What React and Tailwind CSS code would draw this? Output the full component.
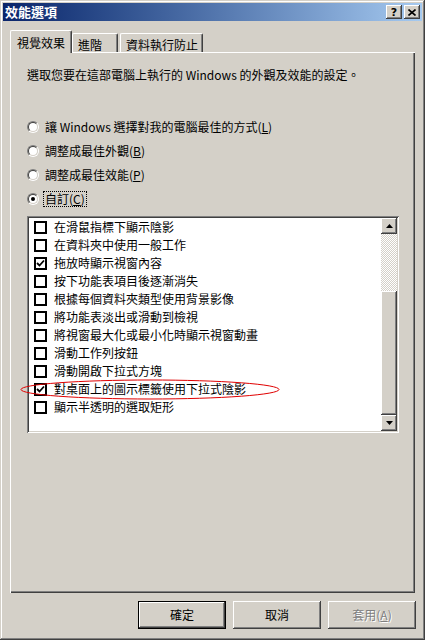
import React from "react";

const raised =
  "shadow-[inset_-1px_-1px_0_#404040,inset_1px_1px_0_#ffffff,inset_-2px_-2px_0_#808080,inset_2px_2px_0_#d4d0c8]";
const sunken =
  "shadow-[inset_1px_1px_0_#808080,inset_-1px_-1px_0_#ffffff,inset_2px_2px_0_#404040,inset_-2px_-2px_0_#d4d0c8]";

function Radio({ checked }) {
  return (
    <span className="relative inline-block w-[12px] h-[12px] shrink-0 rounded-full border border-t-[#808080] border-l-[#808080] border-b-white border-r-white">
      <span className="absolute inset-0 rounded-full border border-t-[#404040] border-l-[#404040] border-b-[#d4d0c8] border-r-[#d4d0c8] bg-white flex items-center justify-center">
        {checked && <span className="w-[4px] h-[4px] rounded-full bg-black" />}
      </span>
    </span>
  );
}

function Check({ checked }) {
  return (
    <span className="w-[13px] h-[13px] shrink-0 border-2 border-black bg-white flex items-center justify-center">
      {checked && (
        <svg width="9" height="9" viewBox="0 0 9 9">
          <polyline points="1,4 3.5,6.5 8,1.5" fill="none" stroke="#000" strokeWidth="1.8" />
        </svg>
      )}
    </span>
  );
}

const items = [
  ["在滑鼠指標下顯示陰影", false],
  ["在資料夾中使用一般工作", false],
  ["拖放時顯示視窗內容", true],
  ["按下功能表項目後逐漸消失", false],
  ["根據每個資料夾類型使用背景影像", false],
  ["將功能表淡出或滑動到檢視", false],
  ["將視窗最大化或最小化時顯示視窗動畫", false],
  ["滑動工作列按鈕", false],
  ["滑動開啟下拉式方塊", false],
  ["對桌面上的圖示標籤使用下拉式陰影", true],
  ["顯示半透明的選取矩形", false],
];

export default function App() {
  return (
    <div
      className={`w-[425px] h-[640px] bg-[#d4d0c8] p-[3px] flex flex-col text-black text-[12px] font-['Noto_Sans_CJK_TC',sans-serif] shadow-[inset_-1px_-1px_0_#404040,inset_1px_1px_0_#d4d0c8,inset_-2px_-2px_0_#808080,inset_2px_2px_0_#ffffff]`}
    >
      {/* title bar */}
      <div className="h-[18px] flex items-center justify-between bg-gradient-to-r from-[#0a246a] to-[#a6caf0] pl-[2px] pr-[2px]">
        <span className="text-white font-bold text-[13px] leading-[18px]">效能選項</span>
        <div className="flex gap-[2px]">
          <div className={`w-[16px] h-[14px] bg-[#d4d0c8] ${raised} flex items-center justify-center text-[11px] font-bold leading-none font-['DejaVu_Sans',sans-serif]`}>
            ?
          </div>
          <div className={`w-[16px] h-[14px] bg-[#d4d0c8] ${raised} flex items-center justify-center`}>
            <svg width="8" height="7" viewBox="0 0 8 7">
              <path d="M0.5 0.5 L7.5 6.5 M7.5 0.5 L0.5 6.5" stroke="#000" strokeWidth="1.6" />
            </svg>
          </div>
        </div>
      </div>

      {/* tabs */}
      <div className="mt-[9px] ml-[7px] h-[23px] flex items-end relative z-10 -mb-px">
        <div className="h-[23px] w-[62px] bg-[#d4d0c8] border-l border-t border-white rounded-tl-[2px] rounded-tr-[2px] border-r border-r-[#404040] shadow-[inset_-1px_0_0_#808080] flex justify-center pt-[4px] leading-[16px]">
          視覺效果
        </div>
        <div className="h-[19px] mb-px w-[46px] bg-[#d4d0c8] border-l border-t border-white rounded-tl-[2px] rounded-tr-[2px] border-r border-r-[#404040] shadow-[inset_-1px_0_0_#808080] pl-[5px] pt-[3px] leading-[16px]">
          進階
        </div>
        <div className="h-[19px] mb-px ml-[2px] w-[83px] bg-[#d4d0c8] border-l border-t border-white rounded-tl-[2px] rounded-tr-[2px] border-r border-r-[#404040] shadow-[inset_-1px_0_0_#808080] pl-[5px] pt-[3px] leading-[16px]">
          資料執行防止
        </div>
      </div>

      {/* panel */}
      <div className="relative ml-[7px] w-[405px] h-[541px] pl-[17px] pt-[15px] shadow-[inset_1px_1px_0_#ffffff,inset_-1px_-1px_0_#404040,inset_-2px_-2px_0_#808080]">
        <div className="leading-[16px]">選取您要在這部電腦上執行的 Windows 的外觀及效能的設定。</div>

        <div className="mt-[32px] flex flex-col">
          <div className="h-[24px] flex items-center gap-[6px]">
            <Radio />
            <span>
              讓 Windows 選擇對我的電腦最佳的方式(<span className="underline">L</span>)
            </span>
          </div>
          <div className="h-[24px] flex items-center gap-[6px]">
            <Radio />
            <span>
              調整成最佳外觀(<span className="underline">B</span>)
            </span>
          </div>
          <div className="h-[24px] flex items-center gap-[6px]">
            <Radio />
            <span>
              調整成最佳效能(<span className="underline">P</span>)
            </span>
          </div>
          <div className="h-[24px] flex items-center gap-[4px]">
            <Radio checked />
            <span className="border border-dotted border-black px-px leading-[14px]">
              自訂(<span className="underline">C</span>)
            </span>
          </div>
        </div>

        {/* list box */}
        <div className={`mt-[5px] w-[372px] h-[217px] bg-white p-[2px] flex ${sunken}`}>
          <div className="flex-1 flex flex-col pl-[5px]">
            {items.map(([t, c]) => (
              <div key={t} className="h-[18px] flex items-center gap-[7px] whitespace-nowrap">
                <Check checked={c} />
                <span className="leading-[16px]">{t}</span>
              </div>
            ))}
          </div>
          <div className="w-[16px] flex flex-col">
            <div className={`h-[16px] bg-[#d4d0c8] ${raised} flex items-center justify-center`}>
              <svg width="7" height="4" viewBox="0 0 7 4">
                <path d="M3.5 0 L7 4 L0 4 Z" fill="#000" />
              </svg>
            </div>
            <div className="h-[57px] bg-[image:repeating-conic-gradient(#ffffff_0_25%,#d4d0c8_0_50%)] bg-[length:2px_2px]" />
            <div className={`flex-1 bg-[#d4d0c8] ${raised}`} />
            <div className={`h-[16px] bg-[#d4d0c8] ${raised} flex items-center justify-center`}>
              <svg width="7" height="4" viewBox="0 0 7 4">
                <path d="M0 0 L7 0 L3.5 4 Z" fill="#000" />
              </svg>
            </div>
          </div>
        </div>

        {/* red annotation ellipse */}
        <svg className="absolute left-[10px] top-[327px] pointer-events-none" width="262" height="24" viewBox="0 0 262 24">
          <ellipse cx="130" cy="10.5" rx="129" ry="9.5" fill="none" stroke="#e00000" strokeWidth="1" />
        </svg>
      </div>

      {/* buttons */}
      <div className="mt-[8px] flex justify-end gap-[7px] pr-[6px]">
        <div className="w-[88px] h-[28px] border border-black bg-[#d4d0c8]">
          <div className={`w-full h-full ${raised} flex items-center justify-center`}>確定</div>
        </div>
        <div className={`w-[88px] h-[28px] bg-[#d4d0c8] ${raised} flex items-center justify-center`}>取消</div>
        <div className={`w-[88px] h-[28px] bg-[#d4d0c8] ${raised} flex items-center justify-center text-[#808080] [text-shadow:1px_1px_0_#ffffff]`}>
          <span>
            套用(<span className="underline">A</span>)
          </span>
        </div>
      </div>
    </div>
  );
}
